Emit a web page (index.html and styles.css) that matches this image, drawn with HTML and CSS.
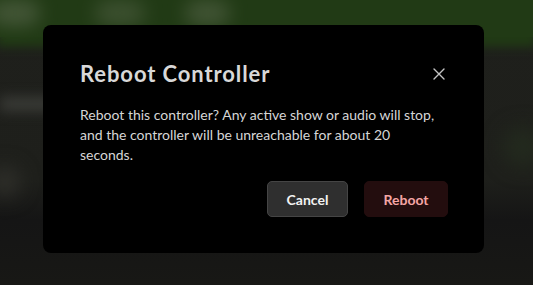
FILE: index.html
```html
<!DOCTYPE html>
<html>
<head>
<meta charset="utf-8">
<link rel="stylesheet" href="styles.css">
</head>
<body>
<div class="backdrop">
  <div class="app">
    <div class="topbar">
      <span class="blob b1"></span>
      <span class="blob b2"></span>
      <span class="blob b3"></span>
    </div>
    <div class="content">
      <span class="band"></span>
      <span class="spot s1"></span>
      <span class="spot s2"></span>
    </div>
  </div>
  <div class="overlay">
    <div class="dialog" role="dialog">
      <div class="dialog-head">
        <h2 class="title">Reboot Controller</h2>
        <button class="close" aria-label="Close">
          <svg width="12" height="12" viewBox="0 0 12 12"><path d="M1 1 L11 11 M11 1 L1 11" stroke="#c4c4c4" stroke-width="1.4" fill="none" stroke-linecap="round"/></svg>
        </button>
      </div>
      <p class="message">Reboot this controller? Any active show or audio will stop, and the controller will be unreachable for about 20 seconds.</p>
      <div class="actions">
        <button class="btn btn-cancel">Cancel</button>
        <button class="btn btn-reboot">Reboot</button>
      </div>
    </div>
  </div>
</div>
</body>
</html>
```
FILE: styles.css
```css
html, body {
  margin: 0;
  padding: 0;
  width: 533px;
  height: 285px;
  overflow: hidden;
  background: #161614;
  font-family: Lato, "Open Sans", sans-serif;
}
.backdrop {
  position: relative;
  width: 533px;
  height: 285px;
}
.app {
  position: absolute;
  inset: 0;
  display: flex;
  flex-direction: column;
  background: linear-gradient(to bottom, #1f201c 0px, #1e1f1b 180px, #151515 220px, #181815 285px);
  overflow: hidden;
}
.topbar {
  position: relative;
  height: 37px;
  background: #213a15;
  box-shadow: 0 7px 9px 3px #213a15;
  flex: none;
}
.blob {
  position: absolute;
  top: 0;
  height: 26px;
  border-radius: 13px;
  background: #526245;
  filter: blur(9px);
  opacity: 0.7;
}
.b1 { left: -10px; width: 50px; }
.b2 { left: 95px; width: 50px; opacity: 0.55; }
.b3 { left: 185px; width: 45px; opacity: 0.65; }
.content {
  position: relative;
  flex: 1;
}
.band {
  position: absolute;
  left: 0;
  top: 61px;
  width: 55px;
  height: 12px;
  background: #40413d;
  filter: blur(7px);
}
.spot {
  position: absolute;
  border-radius: 50%;
  filter: blur(10px);
}
.s1 { left: -10px; top: 130px; width: 30px; height: 30px; background: #30302b; }
.s2 { right: -10px; top: 90px; width: 40px; height: 40px; background: #232a1e; }
.overlay {
  position: absolute;
  inset: 0;
  padding: 25px 0 0 43px;
}
.dialog {
  box-sizing: border-box;
  width: 441px;
  height: 228px;
  background: #000;
  border-radius: 8px;
  padding: 35px 36px 36px 37px;
  display: flex;
  flex-direction: column;
}
.dialog-head {
  display: flex;
  align-items: center;
  justify-content: space-between;
}
.title {
  margin: 0;
  font-size: 22px;
  line-height: 28px;
  font-weight: 700;
  letter-spacing: 0.9px;
  color: #d8d8d8;
}
.close {
  background: none;
  border: 0;
  padding: 0;
  width: 12px;
  height: 12px;
  margin-right: 3px;
  display: flex;
}
.message {
  margin: 17px 8px 0 0;
  font-size: 14px;
  line-height: 20px;
  color: #d6d6d6;
}
.actions {
  margin-top: auto;
  display: flex;
  justify-content: flex-end;
  gap: 16px;
}
.btn {
  box-sizing: border-box;
  height: 36px;
  border-radius: 5px;
  font-family: Lato, "Open Sans", sans-serif;
  font-weight: 700;
  font-size: 14px;
  padding: 0 10px;
}
.btn-cancel {
  width: 81px;
  background: #2f2f2f;
  border: 1px solid #454545;
  color: #f2f2f2;
}
.btn-reboot {
  width: 84px;
  background: #230d0e;
  border: 1px solid #230d0e;
  color: #f5a5a5;
}
```
